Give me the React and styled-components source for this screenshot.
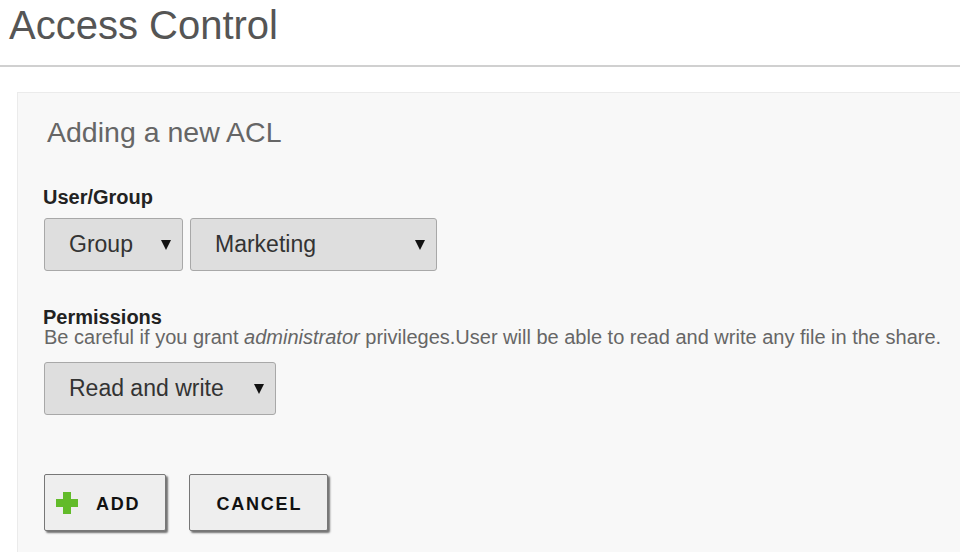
import React from 'react';
import styled, { createGlobalStyle } from 'styled-components';

const GlobalStyle = createGlobalStyle`
  html, body {
    margin: 0;
    padding: 0;
    background: #fff;
    overflow: hidden;
    font-family: "Liberation Sans", Arial, sans-serif;
  }
`;

const Page = styled.div`
  width: 960px;
  height: 552px;
  overflow: hidden;
`;

const Title = styled.h1`
  margin: 3px 0 0;
  padding-left: 9px;
  font-size: 40px;
  line-height: 44px;
  font-weight: normal;
  color: #555;
`;

const Rule = styled.hr`
  margin: 18px 0 0;
  border: none;
  height: 2px;
  background: #d0d0d0;
`;

const Panel = styled.section`
  margin: 25px 0 0 17px;
  width: 980px;
  box-sizing: border-box;
  background: #f8f8f8;
  border: 1px solid #ebebeb;
  padding: 23px 26px 60px;
`;

const Heading = styled.h3`
  margin: 0 0 40px 3px;
  font-size: 28.5px;
  line-height: 32px;
  font-weight: normal;
  color: #666;
`;

const Label = styled.div`
  margin-left: -1px;
  font-size: 20px;
  line-height: 18px;
  font-weight: bold;
  color: #222;
`;

const Hint = styled.div`
  margin-top: 3px;
  font-size: 20px;
  line-height: 16px;
  color: #666;
`;

const Row = styled.div`
  display: flex;
  gap: 7px;
  margin-top: ${p => p.$top}px;
`;

const Select = styled.div`
  width: ${p => p.$width}px;
  height: 53px;
  box-sizing: border-box;
  display: flex;
  align-items: center;
  justify-content: space-between;
  padding: 0 11px 0 24px;
  background: #dedede;
  border: 1px solid #a8a8a8;
  border-radius: 3px;
  font-size: 23px;
  color: #333;
`;

const Caret = styled.span`
  width: 0;
  height: 0;
  border-left: 5px solid transparent;
  border-right: 5px solid transparent;
  border-top: 10px solid #111;
`;

const Section = styled.div`
  margin-top: ${p => p.$top}px;
`;

const Actions = styled.div`
  display: flex;
  gap: 23px;
  margin-top: 59px;
`;

const Button = styled.button`
  height: 57px;
  display: flex;
  align-items: center;
  gap: 18px;
  padding: 3px 25px 0 ${p => (p.$icon ? 11 : 26)}px;
  background: #eee;
  border: 1px solid #777;
  border-radius: 2px;
  box-shadow: 2px 2px 2px rgba(0, 0, 0, 0.55);
  font-family: "Liberation Sans", Arial, sans-serif;
  font-size: 18px;
  font-weight: bold;
  letter-spacing: 1.8px;
  text-transform: uppercase;
  color: #111;
  cursor: pointer;

  svg {
    margin-top: -3px;
  }
`;

const PlusIcon = () => (
  <svg width="22" height="22" viewBox="0 0 22 22">
    <path d="M7 0h8v7h7v8h-7v7H7v-7H0V7h7z" fill="#62bb2a" />
  </svg>
);

export default function App() {
  return (
    <Page>
      <GlobalStyle />
      <Title>Access Control</Title>
      <Rule />
      <Panel>
        <Heading>Adding a new ACL</Heading>
        <Label>User/Group</Label>
        <Row $top={12}>
          <Select $width={139}>Group<Caret /></Select>
          <Select $width={247}>Marketing<Caret /></Select>
        </Row>
        <Section $top={37}>
          <Label>Permissions</Label>
          <Hint>
            Be careful if you grant <em>administrator</em> privileges.User will be able to read and write any file in the share.
          </Hint>
        </Section>
        <Row $top={17}>
          <Select $width={232}>Read and write<Caret /></Select>
        </Row>
        <Actions>
          <Button $icon><PlusIcon />Add</Button>
          <Button>Cancel</Button>
        </Actions>
      </Panel>
    </Page>
  );
}
